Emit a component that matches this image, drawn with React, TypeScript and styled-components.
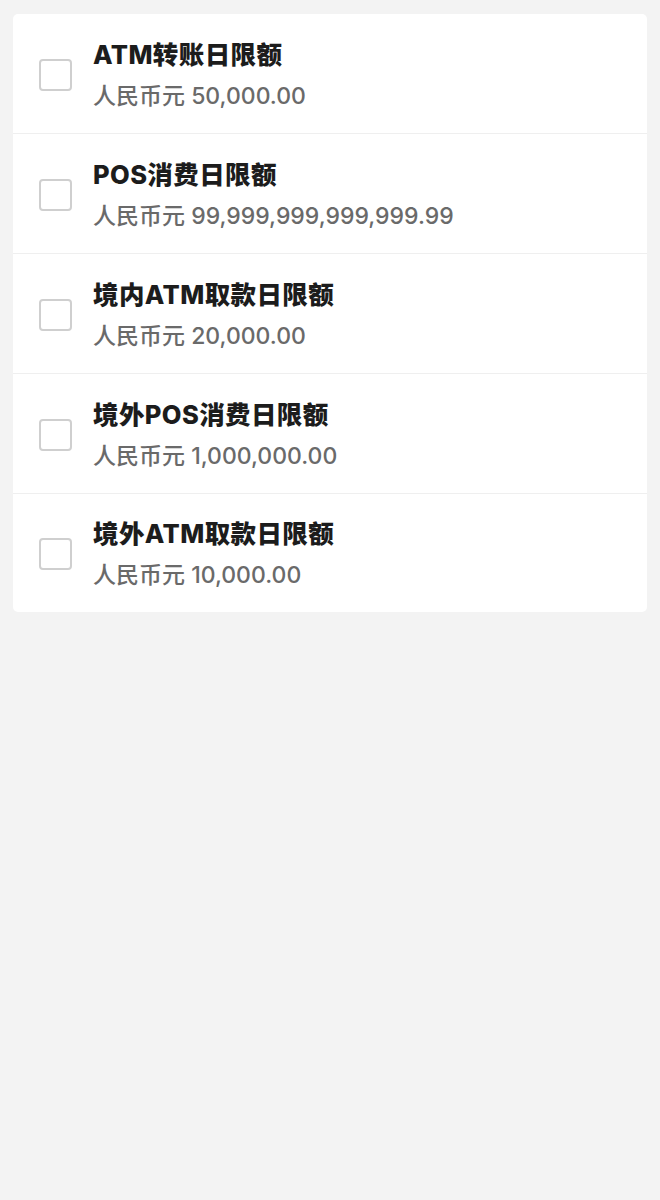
import React from "react";
import styled, { createGlobalStyle } from "styled-components";

const GlobalStyle = createGlobalStyle`
  html, body {
    margin: 0;
    padding: 0;
    background: #f3f3f3;
  }
  body {
    font-family: "Inter", "Noto Sans CJK SC", sans-serif;
  }
`;

const Page = styled.div`
  padding: 14px 13px;
  min-height: 1200px;
  box-sizing: border-box;
`;

const Card = styled.ul`
  list-style: none;
  margin: 0;
  padding: 0;
  background: #ffffff;
  border-radius: 5px;
  overflow: hidden;
`;

const Row = styled.li`
  display: flex;
  align-items: center;
  gap: 21px;
  padding: 24px 26px 22px;
  height: 119px;
  box-sizing: border-box;
  & + & {
    border-top: 1px solid #efefef;
    height: 120px;
  }
  &:last-child {
    height: 119px;
  }
`;

const Box = styled.span`
  flex: none;
  width: 33px;
  height: 32px;
  box-sizing: border-box;
  border: 2px solid #cfcfcf;
  border-radius: 4px;
  background: #fff;
`;

const Texts = styled.div`
  display: flex;
  flex-direction: column;
  gap: 11px;
`;

const Title = styled.div`
  font-size: 25.5px;
  line-height: 31px;
  font-weight: 800;
  letter-spacing: 0.4px;
  color: #1c1c1c;
`;

const Sub = styled.div`
  font-size: 23px;
  line-height: 30px;
  font-weight: 500;
  color: #6a6a6a;
`;

const items = [
  { title: "ATM转账日限额", amount: "50,000.00" },
  { title: "POS消费日限额", amount: "99,999,999,999,999.99" },
  { title: "境内ATM取款日限额", amount: "20,000.00" },
  { title: "境外POS消费日限额", amount: "1,000,000.00" },
  { title: "境外ATM取款日限额", amount: "10,000.00" },
];

export default function App() {
  return (
    <>
      <GlobalStyle />
      <Page>
        <Card>
          {items.map((it) => (
            <Row key={it.title}>
              <Box />
              <Texts>
                <Title>{it.title}</Title>
                <Sub>人民币元 {it.amount}</Sub>
              </Texts>
            </Row>
          ))}
        </Card>
      </Page>
    </>
  );
}
